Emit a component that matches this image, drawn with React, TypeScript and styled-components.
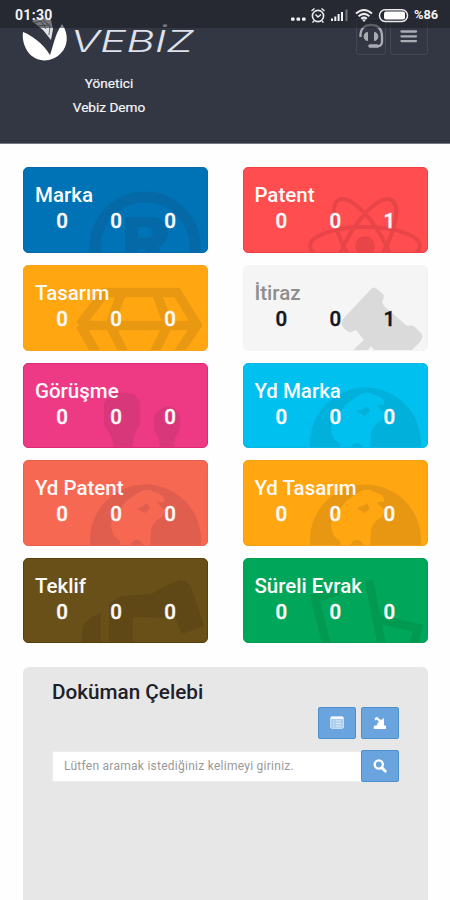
import React from "react";
import styled, { createGlobalStyle } from "styled-components";

const Global = createGlobalStyle`
  * { box-sizing: border-box; }
  body { margin: 0; background: #fff; font-family: Roboto, "Open Sans", sans-serif; }
`;

const Page = styled.div`
  width: 450px;
  height: 900px;
  overflow: hidden;
  position: relative;
  display: flex;
  flex-direction: column;
  background: #fefefe;
`;

const StatusBar = styled.div`
  position: absolute;
  inset: 0 0 auto 0;
  height: 28px;
  padding: 1px 11px 0 15px;
  display: flex;
  align-items: center;
  justify-content: space-between;
  background: rgba(28, 29, 36, 0.55);
  color: #f2f2f4;
`;

const Clock = styled.span`
  font-size: 14px;
  font-weight: 700;
  letter-spacing: 0.3px;
`;

const StatusIcons = styled.div`
  display: flex;
  align-items: center;
  height: 26px;
`;

const Battery = styled.span`
  font-size: 12.8px;
  font-weight: 700;
  width: 25px;
  margin-left: 5.5px;
  white-space: nowrap;
`;

const Header = styled.header`
  height: 144px;
  flex: none;
  display: flex;
  justify-content: space-between;
  background: #333743;
  border-bottom: 1px solid #777983;
  color: #f5f5f7;
`;

const Brand = styled.div`
  width: 218px;
  padding-top: 12px;
  display: flex;
  flex-direction: column;
  align-items: center;
`;

const UserLine = styled.div`
  font-size: 13.6px;
  line-height: 23.6px;
  font-weight: 400;
  -webkit-text-stroke: 0.2px currentColor;
`;

const Tools = styled.div`
  display: flex;
  gap: 4px;
  padding: 18px 22px 0 0;
`;

const ToolButton = styled.button<{ $w: number }>`
  width: ${(p) => p.$w}px;
  height: 37px;
  padding: 0;
  display: flex;
  align-items: center;
  justify-content: center;
  background: transparent;
  border: 1px solid #444854;
  border-radius: 3px;
`;

const Cards = styled.main`
  display: grid;
  grid-template-columns: 185px 185px;
  column-gap: 35px;
  row-gap: 12px;
  grid-auto-rows: 85.6px;
  padding: 23.4px 0 0 23px;
`;

const Card = styled.section<{ $bg: string; $edge: string; $ink: string }>`
  position: relative;
  overflow: hidden;
  border-radius: 5px;
  border: 1px solid ${(p) => p.$edge};
  background: ${(p) => p.$bg};
  color: ${(p) => p.$ink};
  padding: 14px 10px 0 11px;
  &:nth-child(even) { padding-left: 10.4px; }
`;

const Watermark = styled.svg`
  position: absolute;
  left: -1px;
  top: -1px;
`;

const CardTitle = styled.h2<{ $color?: string }>`
  position: relative;
  margin: 0;
  font-size: 20.5px;
  line-height: 26px;
  font-weight: 500;
  white-space: nowrap;
  color: ${(p) => p.$color ?? "inherit"};
`;

const Counts = styled.div`
  position: relative;
  display: grid;
  grid-template-columns: repeat(3, 54px);
  text-align: center;
  font-size: 20.5px;
  line-height: 26px;
  font-weight: 500;
  -webkit-text-stroke: 0.4px currentColor;
`;

const Panel = styled.section`
  flex: 1;
  margin: 23.6px 22px 0 23px;
  padding: 13px 29px 0 29px;
  display: flex;
  flex-direction: column;
  background: #e7e7e7;
  border-radius: 6px 6px 0 0;
`;

const PanelTitle = styled.h2`
  margin: 0;
  font-size: 20.7px;
  line-height: 24px;
  font-weight: 500;
  color: #1d2029;
`;

const Actions = styled.div`
  display: flex;
  justify-content: flex-end;
  gap: 5px;
  padding-top: 3px;
`;

const BlueButton = styled.button`
  width: 38px;
  height: 32px;
  padding: 0;
  flex: none;
  display: flex;
  align-items: center;
  justify-content: center;
  background: #6aa4de;
  border: 1px solid #4b91cd;
  border-radius: 2px;
`;

const SearchRow = styled.div`
  display: flex;
  align-items: center;
  margin-top: 11.5px;
`;

const SearchInput = styled.input`
  flex: 1;
  min-width: 0;
  height: 31px;
  border: 1px solid #ededed;
  border-right: 0;
  padding: 0 11px;
  background: #fff;
  font: 400 12px Roboto, sans-serif;
  letter-spacing: 0.26px;
  &::placeholder { color: #999; opacity: 1; }
`;

const Registered = () => (
  <g>
    <circle cx="122" cy="80" r="50" fill="none" stroke="currentColor" strokeWidth="11" />
    <path fillRule="evenodd" fill="currentColor" d="M102 50H125C139 50 145 57 145 66C145 73 141 78 135 80L142 94H128L122 82H115V94H102ZM115 60V71H124C132 71 132 60 124 60Z" />
  </g>
);

const Atom = () => (
  <g fill="none" stroke="currentColor" strokeWidth="4">
    <ellipse cx="122" cy="79" rx="55" ry="19" />
    <ellipse cx="122" cy="79" rx="53" ry="19" transform="rotate(60 122 79)" />
    <ellipse cx="122" cy="79" rx="53" ry="19" transform="rotate(-60 122 79)" />
    <circle cx="122" cy="79" r="10" fill="currentColor" stroke="none" />
  </g>
);

const Diamond = () => (
  <path
    fill="none"
    stroke="currentColor"
    strokeWidth="9.5"
    d="M57 60L82 27.5H154L174 60L150 96M57 60L78 96M56 60.5H175M98 29L87 60L105 96M134 29L145 60L127 96"
  />
);

const Gavel = () => (
  <path
    fill="currentColor"
    d="M128 24Q131 21 134 24L140 29Q142 32 139 37L141 41L164 61Q168 59 172 62L178 68Q181 72 177 77L168 86H132L128 81L123 87H108L121 75L113 65L108 67Q105 68 100 62Q97 58 100 54Z"
  />
);

const People = () => (
  <path
    fill="currentColor"
    d="M90 31Q100 28 111 31L117 39V61L111 73L109 86H92L88 73L81 61V39ZM139 45Q145 42 151 45L157 53V66L152 75L151 86H137L136 76L131 66V53Z"
  />
);

const Globe = () => (
  <path
    fill="currentColor"
    fillRule="evenodd"
    d="M67 80A55.5 55.5 0 0 1 178 80V88H67ZM98 88L97 81L91 76L88 67L89 56L98 48L103 41L112 35Q119 29 127 30L139 35Q142 38 141 42L134 42L138 47L142 50L139 57Q130 61 128 70L127 88L121 87Q119 80 114 80Q109 80 106 88ZM114 48L120 46L124 43L127 48L122 53L116 50Z"
  />
);

const Horse = () => (
  <path
    fill="currentColor"
    d="M58 87L60 68Q67 58 78 55V87ZM86 87V45L98 38L128 36L148 25L158 22Q165 24 168 29L181 68L159 76L152 60L110 59V87Z"
  />
);

const Evrak = () => (
  <path
    fill="none"
    stroke="currentColor"
    strokeWidth="8.5"
    d="M84 88L72 40L96 33M126 22L139 88M134 61L175 70L170 88"
  />
);

type CardData = {
  title: string;
  counts: number[];
  bg: string;
  edge: string;
  mark: string;
  Art: React.FC;
  ink?: string;
  titleInk?: string;
};

const cards: CardData[] = [
  { title: "Marka", counts: [0, 0, 0], bg: "#0073b7", edge: "#0769ab", mark: "#0568a7", Art: Registered },
  { title: "Patent", counts: [0, 0, 1], bg: "#ff4d50", edge: "#ef4044", mark: "#e84548", Art: Atom },
  { title: "Tasarım", counts: [0, 0, 0], bg: "#ffa611", edge: "#faa317", mark: "#e99812", Art: Diamond },
  { title: "İtiraz", counts: [0, 0, 1], bg: "#f5f5f5", edge: "#f3f3f3", mark: "#dadada", Art: Gavel, ink: "#14161d", titleInk: "#8e8e8e" },
  { title: "Görüşme", counts: [0, 0, 0], bg: "#ee3984", edge: "#df2877", mark: "#d8377a", Art: People },
  { title: "Yd Marka", counts: [0, 0, 0], bg: "#00c0ef", edge: "#08b7e4", mark: "#02b0dc", Art: Globe },
  { title: "Yd Patent", counts: [0, 0, 0], bg: "#f76853", edge: "#ea604d", mark: "#e05e4d", Art: Globe },
  { title: "Yd Tasarım", counts: [0, 0, 0], bg: "#ffa611", edge: "#f5a015", mark: "#e89713", Art: Globe },
  { title: "Teklif", counts: [0, 0, 0], bg: "#695019", edge: "#583f0e", mark: "#5f4816", Art: Horse },
  { title: "Süreli Evrak", counts: [0, 0, 0], bg: "#00a65a", edge: "#05a057", mark: "#029951", Art: Evrak },
];

const Logo = () => (
  <svg width="174" height="60" viewBox="22 12 174 60">
    <path d="M23 32C31 35 43 43 50 55C53 47 55 34 62 24C69 34 68 46 61 53C52 63 36 63 28 52C24 46 22 39 23 32Z" fill="#fff" />
    <path d="M32 21L41 17L51 20L53 29L51 40L43 30Z" fill="#e2e3e6" />
    <path d="M34 23L41 21L46 29M43 20L50 26L49 35M37 26L49 25" stroke="#6f727b" strokeWidth="1" fill="none" />
    <text
      x="70.5"
      y="51.8"
      textLength="123"
      lengthAdjust="spacingAndGlyphs"
      fontFamily="Inter, sans-serif"
      fontStyle="italic"
      fontWeight="300"
      fontSize="29.5"
      fill="#dfe2eb"
    >
      VEBİZ
    </text>
  </svg>
);

const StatusGlyphs = () => (
  <svg width="119" height="26" viewBox="290 1 119 26" fill="none" stroke="#ececef">
    <g fill="#f2f2f4" stroke="none">
      <rect x="291" y="16.5" width="3.6" height="3.3" rx="1" />
      <rect x="296.5" y="16.5" width="3.6" height="3.3" rx="1" />
      <rect x="302" y="16.5" width="3.6" height="3.3" rx="1" />
      <path d="M331 20v-2.5h2V20zM334.300 20v-4.500h2V20zM337.600 20v-7h2V20zM341 20v-9h2V20z" />
      <path d="M345.500 20V8.500h2V20z" fill="#70727a" />
    </g>
    <circle cx="318" cy="15" r="5.600" strokeWidth="1.600" />
    <path d="M315.500 13.500l2.500 2.500 3-2.500M311.500 10l3-2.500M324.500 10l-3-2.500M314 20l-1.500 1.500M322 20l1.500 1.500" strokeWidth="1.500" />
    <path d="M356 12.500Q364 5.500 372 12.500M358.600 15.200Q364 10.500 369.400 15.200M361.200 17.800Q364 15.500 366.800 17.800" strokeWidth="2" />
    <path d="M362 18.500h4l-2 2.500z" fill="#f2f2f4" stroke="none" />
    <rect x="379.500" y="8.800" width="28" height="11.600" rx="5.600" strokeWidth="1.500" />
    <rect x="384" y="10.600" width="21" height="8" rx="2" fill="#fff" stroke="none" />
  </svg>
);

const Headset = () => (
  <svg width="26" height="28" viewBox="0 0 26 28" fill="none" stroke="#a9abb4" strokeWidth="2.300">
    <path d="M2.500 14C2 6 6 2 13 2S24 6 24 14V19Q24 23 19 23.500" />
    <path d="M12 23H19" strokeWidth="3.600" strokeLinecap="round" />
    <path d="M9.500 9.500V17.500C5 17.500 5 9.500 9.500 9.500ZM16.500 9.500V17.500C21 17.500 21 9.500 16.500 9.500Z" fill="#a9abb4" strokeWidth="1" />
  </svg>
);

const MenuIcon = () => (
  <svg width="20" height="16" viewBox="0 0 20 16" stroke="#abadb6" strokeWidth="2.300" strokeLinecap="round">
    <path d="M2.500 2.500H17M2.500 7.300H17M2.500 12.100H17" />
  </svg>
);

const ListIcon = () => (
  <svg width="14" height="13" viewBox="0 0 14 13">
    <rect x=".7" y=".7" width="12.600" height="11.600" rx="1" fill="#a9cbed" stroke="#d8e9f9" />
    <path d="M1 2H13" stroke="#f3f9ff" strokeWidth="2" />
    <path d="M3 5H4M5.500 5H11M3 7.500H4M5.500 7.500H11M3 10H4M5.500 10H11" stroke="#e2effb" strokeWidth="1" />
  </svg>
);

const StampIcon = () => (
  <svg width="14" height="14" viewBox="0 0 14 14" fill="#fff">
    <path d="M1.500 2.500L4 .8L6 2.800L8 4L11 2V9.300L13 10V13H.8V10L4.500 9L4 7.500L6 6L4 3.500L2.500 4.500Z" />
  </svg>
);

const SearchIcon = () => (
  <svg width="14" height="14" viewBox="0 0 14 14" fill="none" stroke="#fff">
    <circle cx="5.800" cy="5.500" r="4.100" strokeWidth="2.300" />
    <path d="M8.800 8.700L12.300 12.200" strokeWidth="2.800" strokeLinecap="round" />
  </svg>
);

export default function App() {
  return (
    <Page>
      <Global />
      <Header>
        <Brand>
          <Logo />
          <UserLine>Yönetici</UserLine>
          <UserLine>Vebiz Demo</UserLine>
        </Brand>
        <Tools>
          <ToolButton $w={30} aria-label="Destek"><Headset /></ToolButton>
          <ToolButton $w={38} aria-label="Menü"><MenuIcon /></ToolButton>
        </Tools>
      </Header>
      <StatusBar>
        <Clock>01:30</Clock>
        <StatusIcons>
          <StatusGlyphs />
          <Battery>%86</Battery>
        </StatusIcons>
      </StatusBar>
      <Cards>
        {cards.map(({ title, counts, bg, edge, mark, Art, ink, titleInk }) => (
          <Card key={title} $bg={bg} $edge={edge} $ink={ink ?? "#fcfaf9"}>
            <Watermark width="185" height="86" viewBox="0 0 185 86" color={mark}>
              <Art />
            </Watermark>
            <CardTitle $color={titleInk}>{title}</CardTitle>
            <Counts>
              {counts.map((n, i) => <span key={i}>{n}</span>)}
            </Counts>
          </Card>
        ))}
      </Cards>
      <Panel>
        <PanelTitle>Doküman Çelebi</PanelTitle>
        <Actions>
          <BlueButton aria-label="Liste"><ListIcon /></BlueButton>
          <BlueButton aria-label="Damga"><StampIcon /></BlueButton>
        </Actions>
        <SearchRow>
          <SearchInput placeholder="Lütfen aramak istediğiniz kelimeyi giriniz." />
          <BlueButton aria-label="Ara"><SearchIcon /></BlueButton>
        </SearchRow>
      </Panel>
    </Page>
  );
}
